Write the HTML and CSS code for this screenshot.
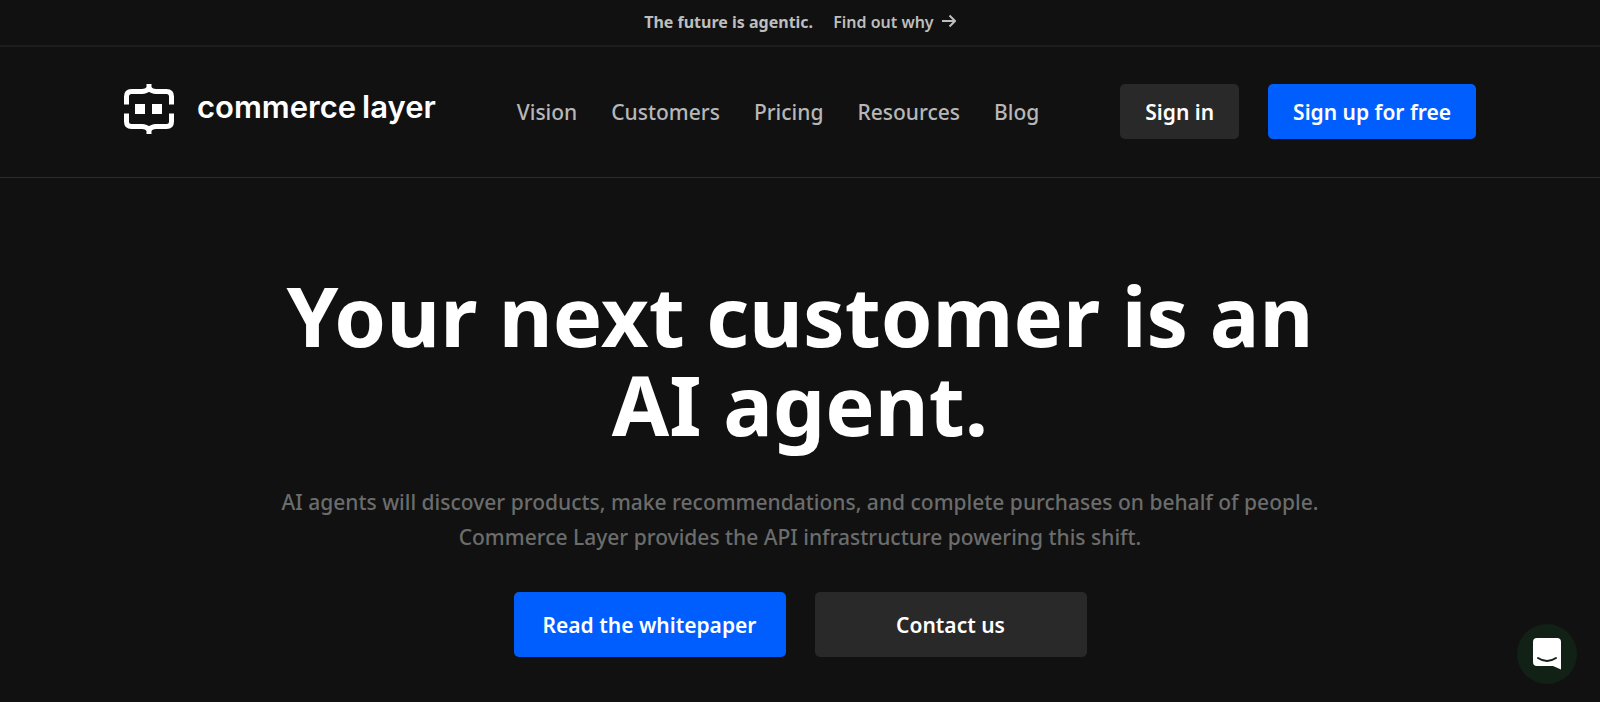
FILE: index.html
```html
<!DOCTYPE html>
<html lang="en">
<head>
    <meta charset="UTF-8">
    <meta name="viewport" content="width=device-width, initial-scale=1.0">
    <title>Commerce Layer</title>
    <link rel="stylesheet" href="styles.css">
</head>
<body>
    <div class="announcement">
        <strong>The future is agentic.</strong>
        <a href="#">Find out why
            <svg class="arrow" viewBox="0 0 14 14" aria-hidden="true"><path d="M0 7H13M7.5 1.5L13 7L7.5 12.5"/></svg>
        </a>
    </div>

    <header class="header">
        <div class="container">
            <a class="logo" href="#">
                <svg class="logo-mark" viewBox="0 0 50 50" aria-hidden="true">
                    <path class="frame" d="M2.5 20.5V12.5Q2.5 7.5 7.5 7.5H18Q22 7.5 25 4.5Q28 7.5 32 7.5H42.5Q47.5 7.5 47.5 12.5V20.5"/>
                    <path class="frame" d="M2.5 29.5V37.5Q2.5 42.5 7.5 42.5H18Q22 42.5 25 45.5Q28 42.5 32 42.5H42.5Q47.5 42.5 47.5 37.5V29.5"/>
                    <path d="M22.5 0H27.5V6H22.5ZM22.5 44H27.5V50H22.5ZM11 20H21V30H11ZM28 20H38V30H28Z"/>
                </svg>
                <span class="logo-text"><span>commerce</span> <span>layer</span></span>
            </a>
            <nav class="nav">
                <a href="#">Vision</a>
                <a href="#">Customers</a>
                <a href="#">Pricing</a>
                <a href="#">Resources</a>
                <a href="#">Blog</a>
            </nav>
            <div class="actions">
                <a class="btn btn-dark" href="#">Sign in</a>
                <a class="btn btn-blue" href="#">Sign up for free</a>
            </div>
        </div>
    </header>

    <main class="hero">
        <h1>Your next customer is an<br>AI agent.</h1>
        <p>AI agents will discover products, make recommendations, and complete purchases on behalf of people.<br>Commerce Layer provides the API infrastructure powering this shift.</p>
        <div class="hero-buttons">
            <a class="btn btn-blue" href="#">Read the whitepaper</a>
            <a class="btn btn-dark" href="#">Contact us</a>
        </div>
    </main>

    <button class="chat-btn" type="button" aria-label="Open chat">
        <svg viewBox="0 0 28 32" aria-hidden="true">
            <path class="bubble" d="M4 0H24Q28 0 28 4V31.5L20 28H4Q0 28 0 24V4Q0 0 4 0Z"/>
            <path class="smile" d="M5 20Q14 26 23 20"/>
        </svg>
    </button>
</body>
</html>
```
FILE: styles.css
```css
* {
    box-sizing: border-box;
}
body {
    margin: 0;
    min-height: 100vh;
    background-color: #111;
    color: #fff;
    font-family: "Noto Sans", "Open Sans", sans-serif;
    font-size: 21px;
}
a {
    color: inherit;
    text-decoration: none;
}
.announcement {
    display: flex;
    justify-content: center;
    align-items: center;
    gap: 20px;
    padding: 10px 20px 11px;
    border-bottom: 2px solid #1c1d1d;
    color: #bebebe;
    font-size: 16px;
    line-height: 24px;
}
.announcement a {
    font-weight: 600;
}
.arrow {
    width: 14px;
    height: 14px;
    margin-left: 4px;
    fill: none;
    stroke: currentColor;
    stroke-width: 2;
}
.header {
    padding: 37px 124px 38px;
    border-bottom: 1px solid #2c2c2c;
}
.container {
    display: flex;
    justify-content: space-between;
    align-items: center;
}
.logo {
    display: flex;
    align-items: center;
    gap: 23px;
    padding-bottom: 5px;
}
.logo-mark {
    width: 50px;
    height: 50px;
    fill: #fff;
}
.logo-mark .frame {
    fill: none;
    stroke: #fff;
    stroke-width: 5;
}
.logo-text {
    display: flex;
    gap: 6px;
    padding-bottom: 4px;
    font-family: Inter, sans-serif;
    font-size: 31px;
    font-weight: 600;
    line-height: 40px;
}
.nav {
    display: flex;
    gap: 34px;
    color: #b7b7b7;
    font-weight: 500;
}
.actions {
    display: flex;
    gap: 29px;
}
.btn {
    padding: 14px 25px 12px;
    border-radius: 5px;
    font-weight: 600;
    line-height: 29px;
    text-align: center;
}
.btn-dark {
    background-color: #292929;
}
.btn-blue {
    background-color: #005eff;
}
.hero {
    padding: 92px 24px 45px;
    text-align: center;
}
.hero h1 {
    margin: 0;
    font-size: 83px;
    font-weight: 700;
    line-height: 89px;
}
.hero p {
    margin: 37px 0;
    color: #6b6c6c;
    font-weight: 500;
    line-height: 35px;
}
.hero-buttons {
    display: flex;
    justify-content: center;
    gap: 29px;
}
.hero-buttons .btn {
    width: 272px;
    padding: 19px 24px 17px;
}
.chat-btn {
    position: fixed;
    right: 23px;
    bottom: 18px;
    display: flex;
    justify-content: center;
    align-items: center;
    width: 60px;
    height: 60px;
    padding: 0;
    border: none;
    border-radius: 50%;
    background-color: #112116;
    cursor: pointer;
}
.chat-btn svg {
    width: 28px;
    height: 32px;
}
.bubble {
    fill: #fff;
}
.smile {
    fill: none;
    stroke: #112116;
    stroke-width: 2;
    stroke-linecap: round;
}
```
